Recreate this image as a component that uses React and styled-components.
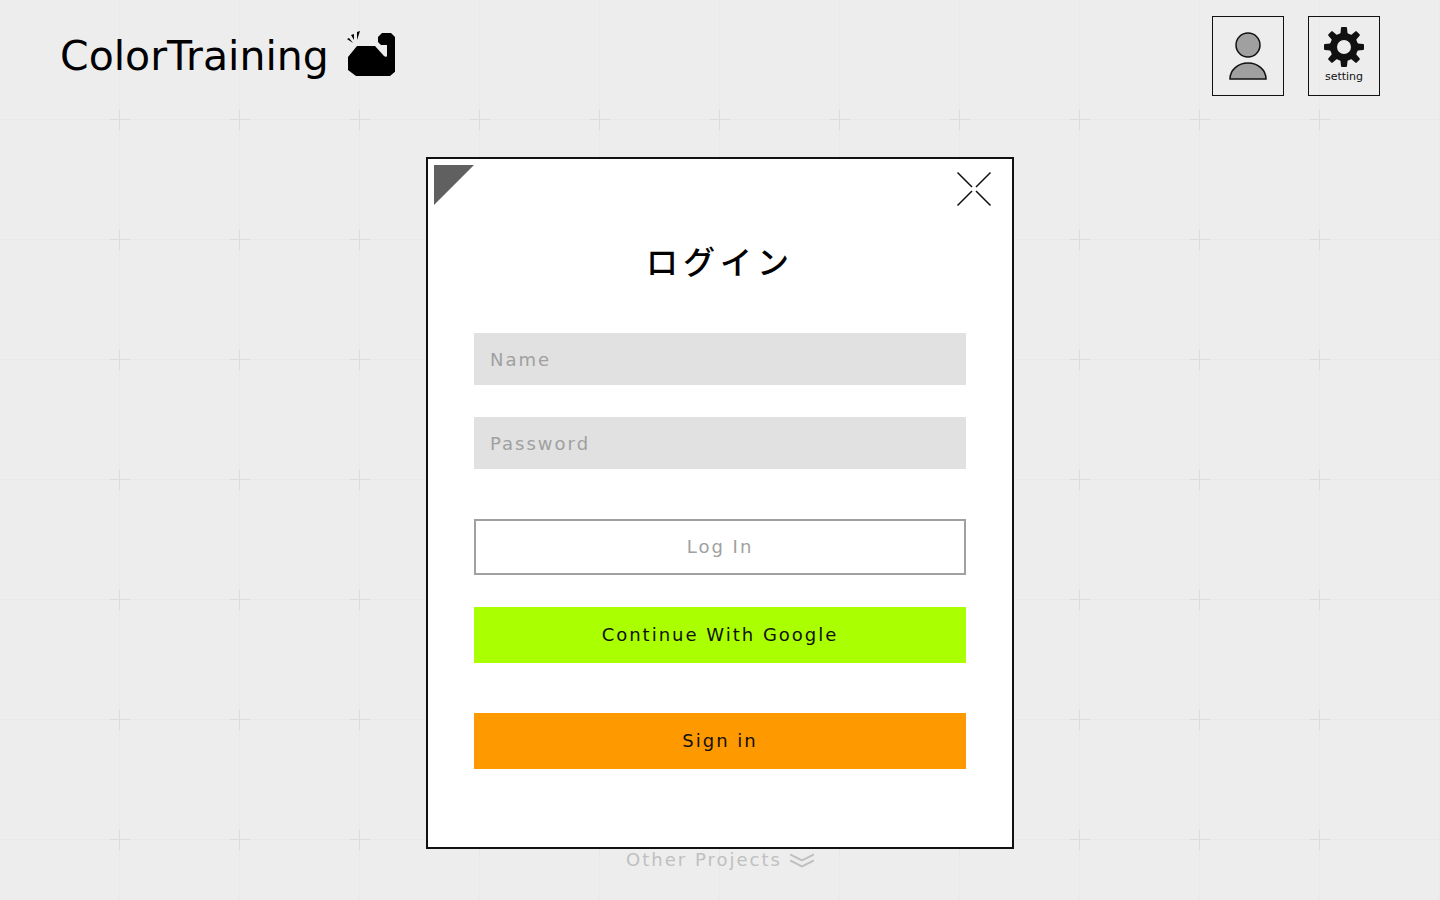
import React from "react";
import styled, { createGlobalStyle, css } from "styled-components";

const GlobalStyle = createGlobalStyle`
  *, *::before, *::after { box-sizing: border-box; }
  body {
    margin: 0;
    background: #ededed;
    color: #111;
    font-family: "DejaVu Sans", "Noto Sans CJK JP", sans-serif;
  }
`;

const Page = styled.div`
  position: relative;
  display: flex;
  flex-direction: column;
  min-height: 100vh;
`;

const Backdrop = styled.svg`
  position: absolute;
  inset: 0;
  z-index: -1;
  width: 100%;
  height: 100%;
`;

const Header = styled.header`
  display: flex;
  justify-content: space-between;
  height: 112px;
  padding: 16px 60px;
`;

const Logo = styled.h1`
  display: flex;
  align-items: center;
  gap: 18px;
  height: 80px;
  margin: 0;
  color: #000;
  font-size: 41px;
  font-weight: 400;
  line-height: 48px;

  svg {
    margin-bottom: 4px;
  }
`;

const Nav = styled.nav`
  display: flex;
  gap: 24px;
`;

const SquareButton = styled.button`
  display: flex;
  flex-direction: column;
  align-items: center;
  justify-content: center;
  gap: 2px;
  width: 72px;
  height: 80px;
  padding: 0;
  border: 1px solid #111;
  background: transparent;
  color: #111;
  font-family: inherit;
  font-size: 11px;
  line-height: 16px;
  cursor: pointer;
`;

const Main = styled.main`
  display: flex;
  flex: 1;
  align-items: flex-end;
  justify-content: center;
  padding-top: 45px;
`;

const Modal = styled.section`
  position: relative;
  width: 100%;
  max-width: 588px;
  padding: 77px 46px 78px;
  border: 2px solid #111;
  background: #fff;
`;

const Corner = styled.span`
  position: absolute;
  top: 6px;
  left: 6px;
  border-top: 40px solid #606060;
  border-right: 40px solid transparent;
`;

const CloseButton = styled.button`
  position: absolute;
  top: 12px;
  right: 20px;
  display: flex;
  padding: 0;
  border: 0;
  background: none;
  color: #111;
  cursor: pointer;
`;

const Title = styled.h2`
  margin: 0 0 49px;
  color: #000;
  font-family: "Noto Sans CJK JP", sans-serif;
  font-size: 32px;
  font-weight: 500;
  letter-spacing: 5px;
  line-height: 48px;
  text-align: center;
`;

const Form = styled.form`
  display: flex;
  flex-direction: column;
  gap: 50px;
`;

const Group = styled.div`
  display: flex;
  flex-direction: column;
  gap: 32px;
`;

const controlText = css`
  font-family: inherit;
  font-size: 18px;
  letter-spacing: 2px;
  line-height: 24px;
`;

const Field = styled.input`
  ${controlText}
  width: 100%;
  height: 52px;
  padding: 0 16px;
  border: 0;
  border-radius: 0;
  background: #e1e1e1;
  color: #111;

  &::placeholder {
    color: #a0a0a0;
    opacity: 1;
  }
`;

const tones = {
  outline: css`
    border: 2px solid #a0a0a0;
    background: #fff;
    color: #a0a0a0;
  `,
  green: css`
    background: #aaff00;
  `,
  orange: css`
    background: #ff9900;
  `,
};

const ActionButton = styled.button`
  ${controlText}
  width: 100%;
  height: 56px;
  padding: 0;
  border: 0;
  color: #111;
  cursor: pointer;
  ${({ $tone }) => tones[$tone]}
`;

const Footer = styled.footer`
  display: flex;
  justify-content: center;
  height: 51px;
`;

const ProjectsLink = styled.a`
  ${controlText}
  display: flex;
  align-items: center;
  gap: 8px;
  height: 22px;
  color: #c0c0c0;
  text-decoration: none;
`;

function GridBackdrop() {
  return (
    <Backdrop aria-hidden="true">
      <defs>
        <pattern id="lines" width="120" height="120" patternUnits="userSpaceOnUse">
          <path d="M119 0h1v120h-1zM0 119h120v1H0z" fill="#e9e9e9" />
        </pattern>
        <pattern id="crosses" x="60" y="60" width="120" height="120" patternUnits="userSpaceOnUse">
          <path d="M59 50h1v20h-1zM50 59h20v1H50z" fill="#dcdcdc" />
        </pattern>
      </defs>
      <rect width="100%" height="100%" fill="url(#lines)" />
      <svg width="100%" height="100%" x="-60" overflow="hidden">
        <g transform="translate(60 0)">
          <rect x="60" y="60" width="100%" height="100%" fill="url(#crosses)" />
        </g>
      </svg>
    </Backdrop>
  );
}

function ArmLogo() {
  return (
    <svg width="48" height="46" viewBox="0 0 48 46" aria-hidden="true">
      <path
        d="M1 26 10 15h18l9 10 2 1 1-1V14h-6l-3-3V6l4-4h9l5 5v33l-6 5H9l-8-6z"
        fill="#000"
      />
      <path d="M0 8l2-1 4 5zM4 4l3-1 0 6zM10 1l3-1-3 9z" fill="#000" />
    </svg>
  );
}

function PersonIcon() {
  return (
    <svg width="40" height="50" viewBox="0 0 40 50" aria-hidden="true">
      <g fill="#a0a0a0" stroke="#111" strokeWidth="1.5">
        <circle cx="20" cy="14" r="12" />
        <path d="M2 48C2 39 10 32 20 32s18 7 18 16z" />
      </g>
    </svg>
  );
}

function GearIcon() {
  return (
    <svg width="40" height="40" viewBox="-20 -20 40 40" aria-hidden="true">
      <circle r="10.5" fill="none" stroke="#111" strokeWidth="7" />
      {[0, 45, 90, 135, 180, 225, 270, 315].map((angle) => (
        <path
          key={angle}
          d="M-5-12-3.500-14-3-19Q-3-20-2-20h4q1 0 1 1L3.500-14 5-12z"
          transform={`rotate(${angle})`}
          fill="#111"
        />
      ))}
    </svg>
  );
}

function CloseIcon() {
  return (
    <svg width="36" height="36" viewBox="0 0 36 36" aria-hidden="true">
      <path
        d="M1.500 1.500 16 16M34.500 1.500 20 16M1.500 34.500 16 20M34.500 34.500 20 20"
        fill="none"
        stroke="currentColor"
        strokeWidth="1.500"
      />
    </svg>
  );
}

function ChevronsIcon() {
  return (
    <svg width="24" height="15" viewBox="0 0 24 15" aria-hidden="true">
      <path d="M0 1.500l12 6 12-6M0 7.500l12 6 12-6" fill="none" stroke="currentColor" strokeWidth="2" />
    </svg>
  );
}

export default function App() {
  return (
    <>
      <GlobalStyle />
      <Page>
        <GridBackdrop />
        <Header>
          <Logo>
            ColorTraining
            <ArmLogo />
          </Logo>
          <Nav>
            <SquareButton type="button" aria-label="Account">
              <PersonIcon />
            </SquareButton>
            <SquareButton type="button">
              <GearIcon />
              setting
            </SquareButton>
          </Nav>
        </Header>
        <Main>
          <Modal role="dialog" aria-labelledby="login-title">
            <Corner />
            <CloseButton type="button" aria-label="Close">
              <CloseIcon />
            </CloseButton>
            <Title id="login-title">ログイン</Title>
            <Form onSubmit={(event) => event.preventDefault()}>
              <Group>
                <Field type="text" placeholder="Name" aria-label="Name" />
                <Field type="password" placeholder="Password" aria-label="Password" />
              </Group>
              <Group>
                <ActionButton type="submit" $tone="outline">Log In</ActionButton>
                <ActionButton type="button" $tone="green">Continue With Google</ActionButton>
              </Group>
              <ActionButton type="button" $tone="orange">Sign in</ActionButton>
            </Form>
          </Modal>
        </Main>
        <Footer>
          <ProjectsLink href="#projects">
            Other Projects
            <ChevronsIcon />
          </ProjectsLink>
        </Footer>
      </Page>
    </>
  );
}
